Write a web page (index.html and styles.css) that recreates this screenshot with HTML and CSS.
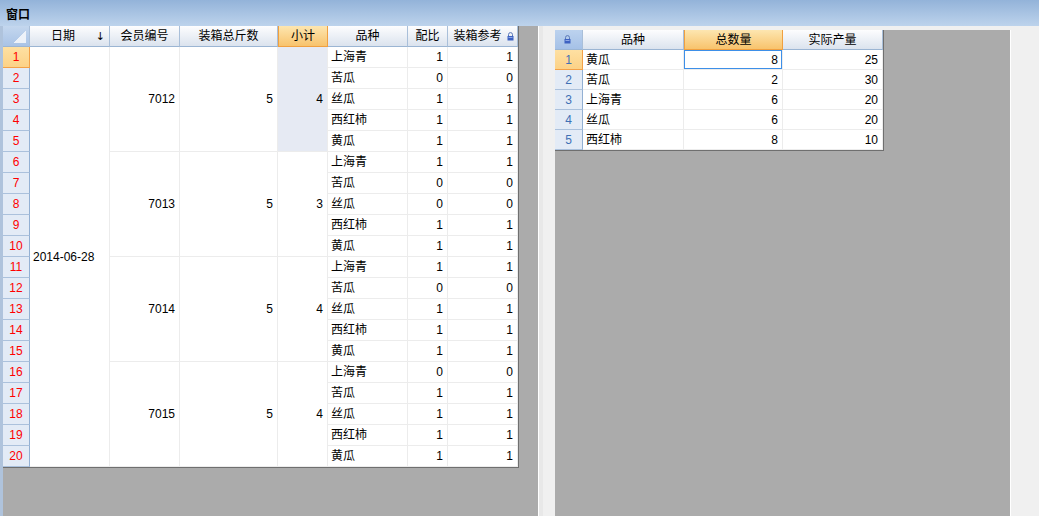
FILE: index.html
```html
<!DOCTYPE html>
<html lang="zh-CN">
<head>
    <meta charset="UTF-8">
    <title>窗口</title>
    <link rel="stylesheet" href="styles.css">
</head>
<body>
    <div class="titlebar">窗口</div>
    <div class="main">
        <div class="pane-left">
            <div class="grid grid-left">
                <div class="hd corner"></div>
                <div class="hd"><span class="hd-text">日期</span><span class="sort">↓</span></div>
                <div class="hd">会员编号</div>
                <div class="hd">装箱总斤数</div>
                <div class="hd hd-active">小计</div>
                <div class="hd">品种</div>
                <div class="hd">配比</div>
                <div class="hd"><span class="hd-text">装箱参考</span>
                    <svg class="lock" width="7" height="9" viewBox="0 0 7 9"><path d="M1.5 4.5V2.6a2 2 0 0 1 4 0v1.9" fill="none" stroke="#5a78b8" stroke-width="1"/><rect x="0.5" y="4" width="6" height="4.5" fill="#3d62c2"/><rect x="1.5" y="5" width="4" height="1" fill="#8ea8e6"/></svg>
                </div>

                <div class="rh rh-active">1</div>
                <div class="c span20">2014-06-28</div>
                <div class="c num span5">7012</div>
                <div class="c num span5">5</div>
                <div class="c num span5 sel">4</div>
                <div class="c">上海青</div><div class="c num">1</div><div class="c num">1</div>
                <div class="rh">2</div><div class="c">苦瓜</div><div class="c num">0</div><div class="c num">0</div>
                <div class="rh">3</div><div class="c">丝瓜</div><div class="c num">1</div><div class="c num">1</div>
                <div class="rh">4</div><div class="c">西红柿</div><div class="c num">1</div><div class="c num">1</div>
                <div class="rh">5</div><div class="c">黄瓜</div><div class="c num">1</div><div class="c num">1</div>

                <div class="rh">6</div>
                <div class="c num span5">7013</div>
                <div class="c num span5">5</div>
                <div class="c num span5">3</div>
                <div class="c">上海青</div><div class="c num">1</div><div class="c num">1</div>
                <div class="rh">7</div><div class="c">苦瓜</div><div class="c num">0</div><div class="c num">0</div>
                <div class="rh">8</div><div class="c">丝瓜</div><div class="c num">0</div><div class="c num">0</div>
                <div class="rh">9</div><div class="c">西红柿</div><div class="c num">1</div><div class="c num">1</div>
                <div class="rh">10</div><div class="c">黄瓜</div><div class="c num">1</div><div class="c num">1</div>

                <div class="rh">11</div>
                <div class="c num span5">7014</div>
                <div class="c num span5">5</div>
                <div class="c num span5">4</div>
                <div class="c">上海青</div><div class="c num">1</div><div class="c num">1</div>
                <div class="rh">12</div><div class="c">苦瓜</div><div class="c num">0</div><div class="c num">0</div>
                <div class="rh">13</div><div class="c">丝瓜</div><div class="c num">1</div><div class="c num">1</div>
                <div class="rh">14</div><div class="c">西红柿</div><div class="c num">1</div><div class="c num">1</div>
                <div class="rh">15</div><div class="c">黄瓜</div><div class="c num">1</div><div class="c num">1</div>

                <div class="rh">16</div>
                <div class="c num span5">7015</div>
                <div class="c num span5">5</div>
                <div class="c num span5">4</div>
                <div class="c">上海青</div><div class="c num">0</div><div class="c num">0</div>
                <div class="rh">17</div><div class="c">苦瓜</div><div class="c num">1</div><div class="c num">1</div>
                <div class="rh">18</div><div class="c">丝瓜</div><div class="c num">1</div><div class="c num">1</div>
                <div class="rh">19</div><div class="c">西红柿</div><div class="c num">1</div><div class="c num">1</div>
                <div class="rh">20</div><div class="c">黄瓜</div><div class="c num">1</div><div class="c num">1</div>
            </div>
        </div>

        <div class="splitter"></div>

        <div class="pane-right">
            <div class="grid grid-right">
                <div class="hd corner-lock">
                    <svg class="lock" width="7" height="9" viewBox="0 0 7 9"><path d="M1.5 4.5V2.6a2 2 0 0 1 4 0v1.9" fill="none" stroke="#5a78b8" stroke-width="1"/><rect x="0.5" y="4" width="6" height="4.5" fill="#3d62c2"/><rect x="1.5" y="5" width="4" height="1" fill="#8ea8e6"/></svg>
                </div>
                <div class="hd">品种</div>
                <div class="hd hd-active">总数量</div>
                <div class="hd">实际产量</div>

                <div class="rh rh-active">1</div><div class="c">黄瓜</div><div class="c num focus">8</div><div class="c num">25</div>
                <div class="rh">2</div><div class="c">苦瓜</div><div class="c num">2</div><div class="c num">30</div>
                <div class="rh">3</div><div class="c">上海青</div><div class="c num">6</div><div class="c num">20</div>
                <div class="rh">4</div><div class="c">丝瓜</div><div class="c num">6</div><div class="c num">20</div>
                <div class="rh">5</div><div class="c">西红柿</div><div class="c num">8</div><div class="c num">10</div>
            </div>
        </div>

        <div class="side"></div>
    </div>
</body>
</html>
```

FILE: styles.css
```css
* {
    box-sizing: border-box;
}
body {
    margin: 0;
    width: 1039px;
    height: 516px;
    overflow: hidden;
    font-family: "Liberation Sans", "Noto Sans CJK SC", sans-serif;
    font-size: 12px;
    color: #000;
    background-color: #f0f0f0;
}
.titlebar {
    height: 26px;
    padding: 0 6px;
    display: flex;
    align-items: center;
    font-weight: bold;
    background: linear-gradient(#93b3d9, #bdd3ec);
}
.main {
    display: flex;
    height: 490px;
}
.pane-left {
    width: 538px;
    border-left: 3px solid #afc3dc;
    background-color: #ababab;
}
.splitter {
    width: 17px;
    border-left: 1px solid #ffffff;
    background: linear-gradient(to right, #e8e8e8 4px, #f0f0f0 4px);
}
.pane-right {
    width: 456px;
    margin-top: 4px;
    border-right: 1px solid #ffffff;
    background-color: #ababab;
}
.side {
    flex: 1;
}

/* grids */
.grid {
    display: grid;
    border-right: 1px solid #6f6f6f;
    border-bottom: 1px solid #6f6f6f;
    line-height: 1;
}
.grid-left {
    width: 516px;
    grid-template-columns: 27px 80px 70px 98px 50px 80px 40px 70px;
    grid-template-rows: repeat(21, 21px);
}
.grid-right {
    width: 329px;
    grid-template-columns: 28px 101px 99px 100px;
    grid-template-rows: repeat(6, 20px);
}
.hd {
    display: flex;
    align-items: center;
    justify-content: center;
    border-right: 1px solid #a9bfd9;
    border-bottom: 1px solid #9bb5d3;
    background: linear-gradient(#fdfdfe, #dbe3ee);
}
.hd-text {
    flex: 1;
    text-align: center;
}
.sort {
    margin-right: 4px;
    font-family: "DejaVu Sans", sans-serif;
    font-size: 11px;
}
.lock {
    margin-right: 3px;
    flex: none;
}
.hd-active {
    background: linear-gradient(#fde6b0, #f8c36c);
    border-right-color: #f0a040;
    border-bottom-color: #f0a040;
    border-left: 1px solid #f0a040;
}
.corner {
    position: relative;
    background: linear-gradient(#c4d7ee, #a9c3e6);
}
.corner::after {
    content: "";
    position: absolute;
    right: 3px;
    bottom: 3px;
    width: 13px;
    height: 13px;
    background: linear-gradient(to bottom right, transparent 50%, #edf2f9 50%);
}
.corner-lock {
    background: linear-gradient(#bcd2ee, #a5c1e7);
}
.rh {
    display: flex;
    align-items: center;
    justify-content: center;
    color: #ff0000;
    background-color: #e3ebf6;
    border-right: 1px solid #93b0d3;
    border-bottom: 1px solid #abc1dc;
}
.grid-right .rh {
    color: #3f70b5;
}
.rh-active {
    background: linear-gradient(#fee0a2, #fcd287);
    border-color: #f3a148;
}
.c {
    display: flex;
    align-items: center;
    padding: 0 4px 0 3px;
    background-color: #ffffff;
    border-right: 1px solid #ececec;
    border-bottom: 1px solid #ececec;
}
.num {
    justify-content: flex-end;
}
.span5 {
    grid-row: span 5;
}
.span20 {
    grid-row: span 20;
}
.sel {
    background-color: #e6eaf3;
}
.focus {
    box-shadow: inset 0 0 0 1px #3d8fe8;
}
```
